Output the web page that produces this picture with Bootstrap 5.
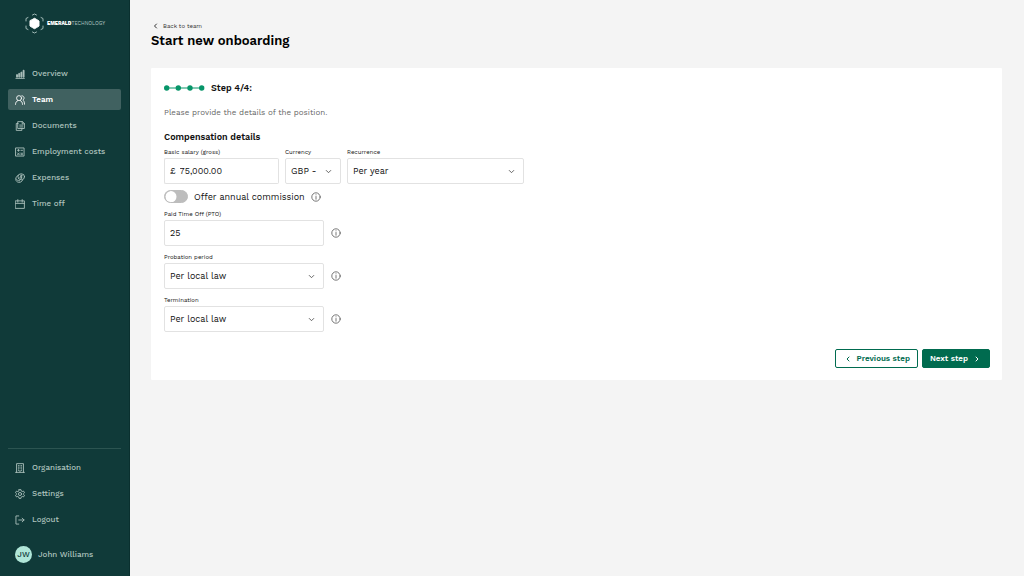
<!DOCTYPE html>
<html lang="en">
<head>
<meta charset="utf-8">
<meta name="viewport" content="width=device-width, initial-scale=1">
<title>Start new onboarding</title>
<link href="https://cdn.jsdelivr.net/npm/bootstrap@5.3.0/dist/css/bootstrap.min.css" rel="stylesheet">
<style>
body { font-family: "Work Sans", Inter, sans-serif; font-size: 8px; line-height: 12px; background: #f4f4f4; color: #111; }
svg { flex: none; fill: none; stroke: currentColor; stroke-width: 1; stroke-linecap: round; stroke-linejoin: round; }
.sidebar { width: 130px; padding: 12px 8px 13px; background: #103a39; border-right: 1px solid #0a302f; flex: none; }
.brand { gap: 2px; padding-left: 16px; height: 22px; color: #fff; margin-bottom: 29px; text-decoration: none; }
.brand-name { font-size: 5px; line-height: 8px; color: #b3c6c3; }
.brand-name b { font-weight: 800; color: #fff; }
.side-nav { gap: 5px; }
.side-nav .nav-link { display: flex; align-items: center; gap: 7px; height: 21px; padding: 0 7px; border-radius: 2px; color: #afc4bf; font-weight: 500; }
.side-nav .nav-link:hover { color: #fff; }
.side-nav .nav-link.active { background: #406160; color: #fff; font-weight: 600; }
.side-nav svg { stroke-width: 1.4; }
.side-foot { border-top: 1px solid #2c5451; padding-top: 8px; }
.profile { gap: 6px; margin-top: 16px; padding-left: 7px; color: #afc4bf; font-weight: 500; }
.avatar { width: 17px; height: 17px; background: #b0e6d8; color: #103a39; }
.page { padding: 20px 22px 20px 21px; }
.back { gap: 4px; font-size: 6px; line-height: 12px; color: #333; text-decoration: none; padding-left: 2px; }
.title { font-size: 13px; line-height: 18px; font-weight: 600; color: #000; margin-bottom: 18px; }
.panel { border: 0; border-radius: 1px; padding: 14px 12px 12px 13px; }
.step { font-size: 9px; font-weight: 600; gap: 6px; margin-bottom: 13px; }
.hint { color: #666; margin-bottom: 12px; }
.section-title { font-size: 9px; line-height: 12px; font-weight: 600; margin-bottom: 4px; }
.field-label { font-size: 6px; line-height: 10px; margin-bottom: 1px; display: block; color: #111; }
.form-control, .form-select, .input-group-text { height: 26px; font-size: 9px; line-height: 14px; padding: 0 5px; color: #111; border: 1px solid #e2e2e2; border-radius: 2px; background-color: #fff; }
.form-select { padding-right: 20px; background-size: 7px 7px; background-position: right 8px center;
  background-image: url("data:image/svg+xml,%3Csvg xmlns='http://www.w3.org/2000/svg' viewBox='0 0 7 7'%3E%3Cpath d='M1 2.2l2.5 2.5L6 2.2' fill='none' stroke='%23555' stroke-width='.9'/%3E%3C/svg%3E"); }
.input-group-text { border-right: 0; padding-right: 4px; }
.input-group .form-control { border-left: 0; padding-left: 1px; }
.f-salary { width: 115px; } .f-currency { width: 56px; } .f-recurrence { width: 177px; } .f-std { width: 160px; }
.fields { gap: 6px; }
.stack { gap: 6px; }
.switch-row { gap: 6px; height: 13px; margin: 6px 0; font-size: 9px; }
.switch-row .form-check-input { width: 24px; height: 13px; margin: 0; float: none; border: 1px solid #bdbdbd; background-color: #bdbdbd;
  background-size: 12px 12px; background-image: url("data:image/svg+xml,%3Csvg xmlns='http://www.w3.org/2000/svg' viewBox='0 0 12 12'%3E%3Ccircle cx='6' cy='6' r='5.5' fill='%23fff'/%3E%3C/svg%3E"); }
.info { border: 0; background: none; padding: 0; color: #555; display: flex; height: 10px; }
.info svg { stroke-width: .8; }
.with-info { gap: 7px; }
.actions { gap: 4px; margin-top: 17px; }
.actions .btn { display: flex; align-items: center; gap: 4px; height: 19px; padding: 0 7px; font-size: 8px; line-height: 12px; font-weight: 600; border-radius: 2px; border-color: #006b4f; color: #006b4f; }
.actions .btn-next { background: #006b4f; color: #fff; }
</style>
</head>
<body>
<div class="d-flex min-vh-100">
  <aside class="sidebar d-flex flex-column">
    <a href="#" class="brand d-flex align-items-center">
      <svg width="21" height="21" viewBox="0 0 21 21"><path d="M8.300 6.500l2.200-1.200 2.200 1.200 2.300 1.500v5l-2.300 1.500-2.200 1.200-2.200-1.200L6 13V8z" fill="#fff" stroke="#fff"/><g stroke="#9fb8b5"><path d="M8.500 2l2-1 2 1M8.500 19l2 1 2-1M2 8V5.500l2-1M19 8V5.500l-2-1M2 13v2.500l2 1M19 13v2.500l-2 1"/></g></svg>
      <span class="brand-name"><b>EMERALD</b>TECHNOLOGY</span>
    </a>
    <nav class="nav flex-column flex-nowrap side-nav" aria-label="Main">
      <a class="nav-link" href="#"><svg width="10" height="10" viewBox="0 0 16 16"><path d="M1.500 15h13.500M2.500 12.500V9H4v3.500zM6 12.500V7h1.500v5.500zM9.500 12.500V5H11v7.500zM13 12.500V2h1.500v10.500z" fill="currentColor"/></svg>Overview</a>
      <a class="nav-link active" href="#" aria-current="page"><svg width="10" height="10" viewBox="0 0 16 16"><circle cx="6.500" cy="5" r="4"/><path d="M.8 15c0-3 1.500-5 3.500-6M8.700 9c2 1 3.300 3 3.300 6M11 1.200c4 0 4.800 5.300 1.500 7 1.800 1 2.700 3 2.700 6.500"/></svg>Team</a>
      <a class="nav-link" href="#"><svg width="10" height="10" viewBox="0 0 16 16"><path d="M5 1h7l3 3v8H5zM11.500 1v3.500H15M5 4H2v11h9v-3M7.500 6.500h5M7.500 9.500h5"/></svg>Documents</a>
      <a class="nav-link" href="#"><svg width="10" height="10" viewBox="0 0 16 16"><path d="M1.500 1.500h13v13h-13zM4 5.300h3M5.500 3.800v3M9.500 5.300h2.500M4 9.500l3 3M7 9.500l-3 3M9.500 10h2.500M9.500 12.300h2.500"/></svg>Employment costs</a>
      <a class="nav-link" href="#"><svg width="10" height="10" viewBox="0 0 16 16"><ellipse cx="10" cy="6" rx="5.300" ry="4.800"/><path d="M4.500 4c-5 3-4.500 10 1.500 11 3 0 5-1 6-3.500M2 9.500c1 2 3 3.200 5.500 3M11.700 4.300c-4-1-4 1.700-2 1.700s2 2.700-2 1.700M10 3v6"/></svg>Expenses</a>
      <a class="nav-link" href="#"><svg width="10" height="10" viewBox="0 0 16 16"><path d="M1 3h14v12H1zM1 7h14M4.500 1v4M11.500 1v4"/></svg>Time off</a>
    </nav>
    <div class="side-foot mt-auto">
      <nav class="nav flex-column side-nav" aria-label="Account">
        <a class="nav-link" href="#"><svg width="10" height="10" viewBox="0 0 16 16"><path d="M1 15h14M2.500 15V1h11v14M5.500 4v1M10.500 4v1M5.500 7.500v1M10.500 7.500v1M5.500 11v1M10.500 11v1M8 4v1M8 7.500v1M8 11.500v3"/></svg>Organisation</a>
        <a class="nav-link" href="#"><svg width="10" height="10" viewBox="0 0 16 16"><circle cx="8" cy="8" r="2.500"/><path d="M6.500 1h3l.5 2.200 1.500.9 2.200-.7 1.500 2.600L13.500 7.500v1l1.700 1.500-1.500 2.600-2.200-.7-1.500.9-.5 2.200h-3L6 12.800l-1.500-.9-2.200.7L.8 10l1.700-1.500v-1L.8 6l1.500-2.600 2.200.7L6 3.200z"/></svg>Settings</a>
        <a class="nav-link" href="#"><svg width="10" height="10" viewBox="0 0 16 16"><path d="M6 1.500H1.500v13H6M6 8h8.500M11.500 5l3 3-3 3"/></svg>Logout</a>
      </nav>
      <div class="profile d-flex align-items-center"><span class="avatar rounded-circle d-flex align-items-center justify-content-center">JW</span>John Williams</div>
    </div>
  </aside>

  <main class="page flex-grow-1">
    <a href="#" class="back d-flex align-items-center"><svg width="6" height="6" viewBox="0 0 6 6"><path d="M3.500 1l-2 2 2 2"/></svg>Back to team</a>
    <h1 class="title">Start new onboarding</h1>
    <form class="card panel">
      <div class="step d-flex align-items-center">
        <svg width="41" height="6" viewBox="0 0 41 6"><g stroke="#079569"><path d="M3 3h35"/><g fill="#079569" stroke="none"><circle cx="2.700" cy="3" r="2.700"/><circle cx="14.300" cy="3" r="2.700"/><circle cx="26" cy="3" r="2.700"/><circle cx="37.700" cy="3" r="2.700"/></g></g></svg>
        <span>Step 4/4:</span>
      </div>
      <p class="hint">Please provide the details of the position.</p>
      <h2 class="section-title">Compensation details</h2>
      <div class="fields d-flex flex-wrap">
        <div class="f-salary"><label class="field-label" for="salary">Basic salary (gross)</label>
          <div class="input-group flex-nowrap"><span class="input-group-text">£</span><input id="salary" class="form-control" value="75,000.00"></div></div>
        <div class="f-currency"><label class="field-label" for="currency">Currency</label>
          <select id="currency" class="form-select"><option>GBP -</option></select></div>
        <div class="f-recurrence"><label class="field-label" for="recurrence">Recurrence</label>
          <select id="recurrence" class="form-select"><option>Per year</option></select></div>
      </div>
      <div class="switch-row form-switch d-flex align-items-center p-0">
        <input class="form-check-input" type="checkbox" role="switch" id="commission"><label for="commission">Offer annual commission</label>
        <button type="button" class="info" aria-label="About commission"><svg width="10" height="10" viewBox="0 0 10 10"><circle cx="5" cy="5" r="4.200"/><path d="M5 4.500v2.700M5 2.800v.1"/></svg></button>
      </div>
      <div class="stack d-flex flex-column">
        <div><label class="field-label" for="pto">Paid Time Off (PTO)</label>
          <div class="with-info d-flex align-items-center"><input id="pto" class="form-control f-std" value="25"><button type="button" class="info" aria-label="About paid time off"><svg width="10" height="10" viewBox="0 0 10 10"><circle cx="5" cy="5" r="4.200"/><path d="M5 4.500v2.700M5 2.800v.1"/></svg></button></div></div>
        <div><label class="field-label" for="probation">Probation period</label>
          <div class="with-info d-flex align-items-center"><select id="probation" class="form-select f-std"><option>Per local law</option></select><button type="button" class="info" aria-label="About probation"><svg width="10" height="10" viewBox="0 0 10 10"><circle cx="5" cy="5" r="4.200"/><path d="M5 4.500v2.700M5 2.800v.1"/></svg></button></div></div>
        <div><label class="field-label" for="termination">Termination</label>
          <div class="with-info d-flex align-items-center"><select id="termination" class="form-select f-std"><option>Per local law</option></select><button type="button" class="info" aria-label="About termination"><svg width="10" height="10" viewBox="0 0 10 10"><circle cx="5" cy="5" r="4.200"/><path d="M5 4.500v2.700M5 2.800v.1"/></svg></button></div></div>
      </div>
      <div class="actions d-flex justify-content-end">
        <button type="button" class="btn"><svg width="10" height="8" viewBox="0 0 10 8"><path d="M6 2L4 4l2 2"/></svg>Previous step</button>
        <button type="submit" class="btn btn-next">Next step<svg width="10" height="8" viewBox="0 0 10 8"><path d="M4 2l2 2-2 2"/></svg></button>
      </div>
    </form>
  </main>
</div>
<script src="https://cdn.jsdelivr.net/npm/bootstrap@5.3.0/dist/js/bootstrap.bundle.min.js"></script>
</body>
</html>
